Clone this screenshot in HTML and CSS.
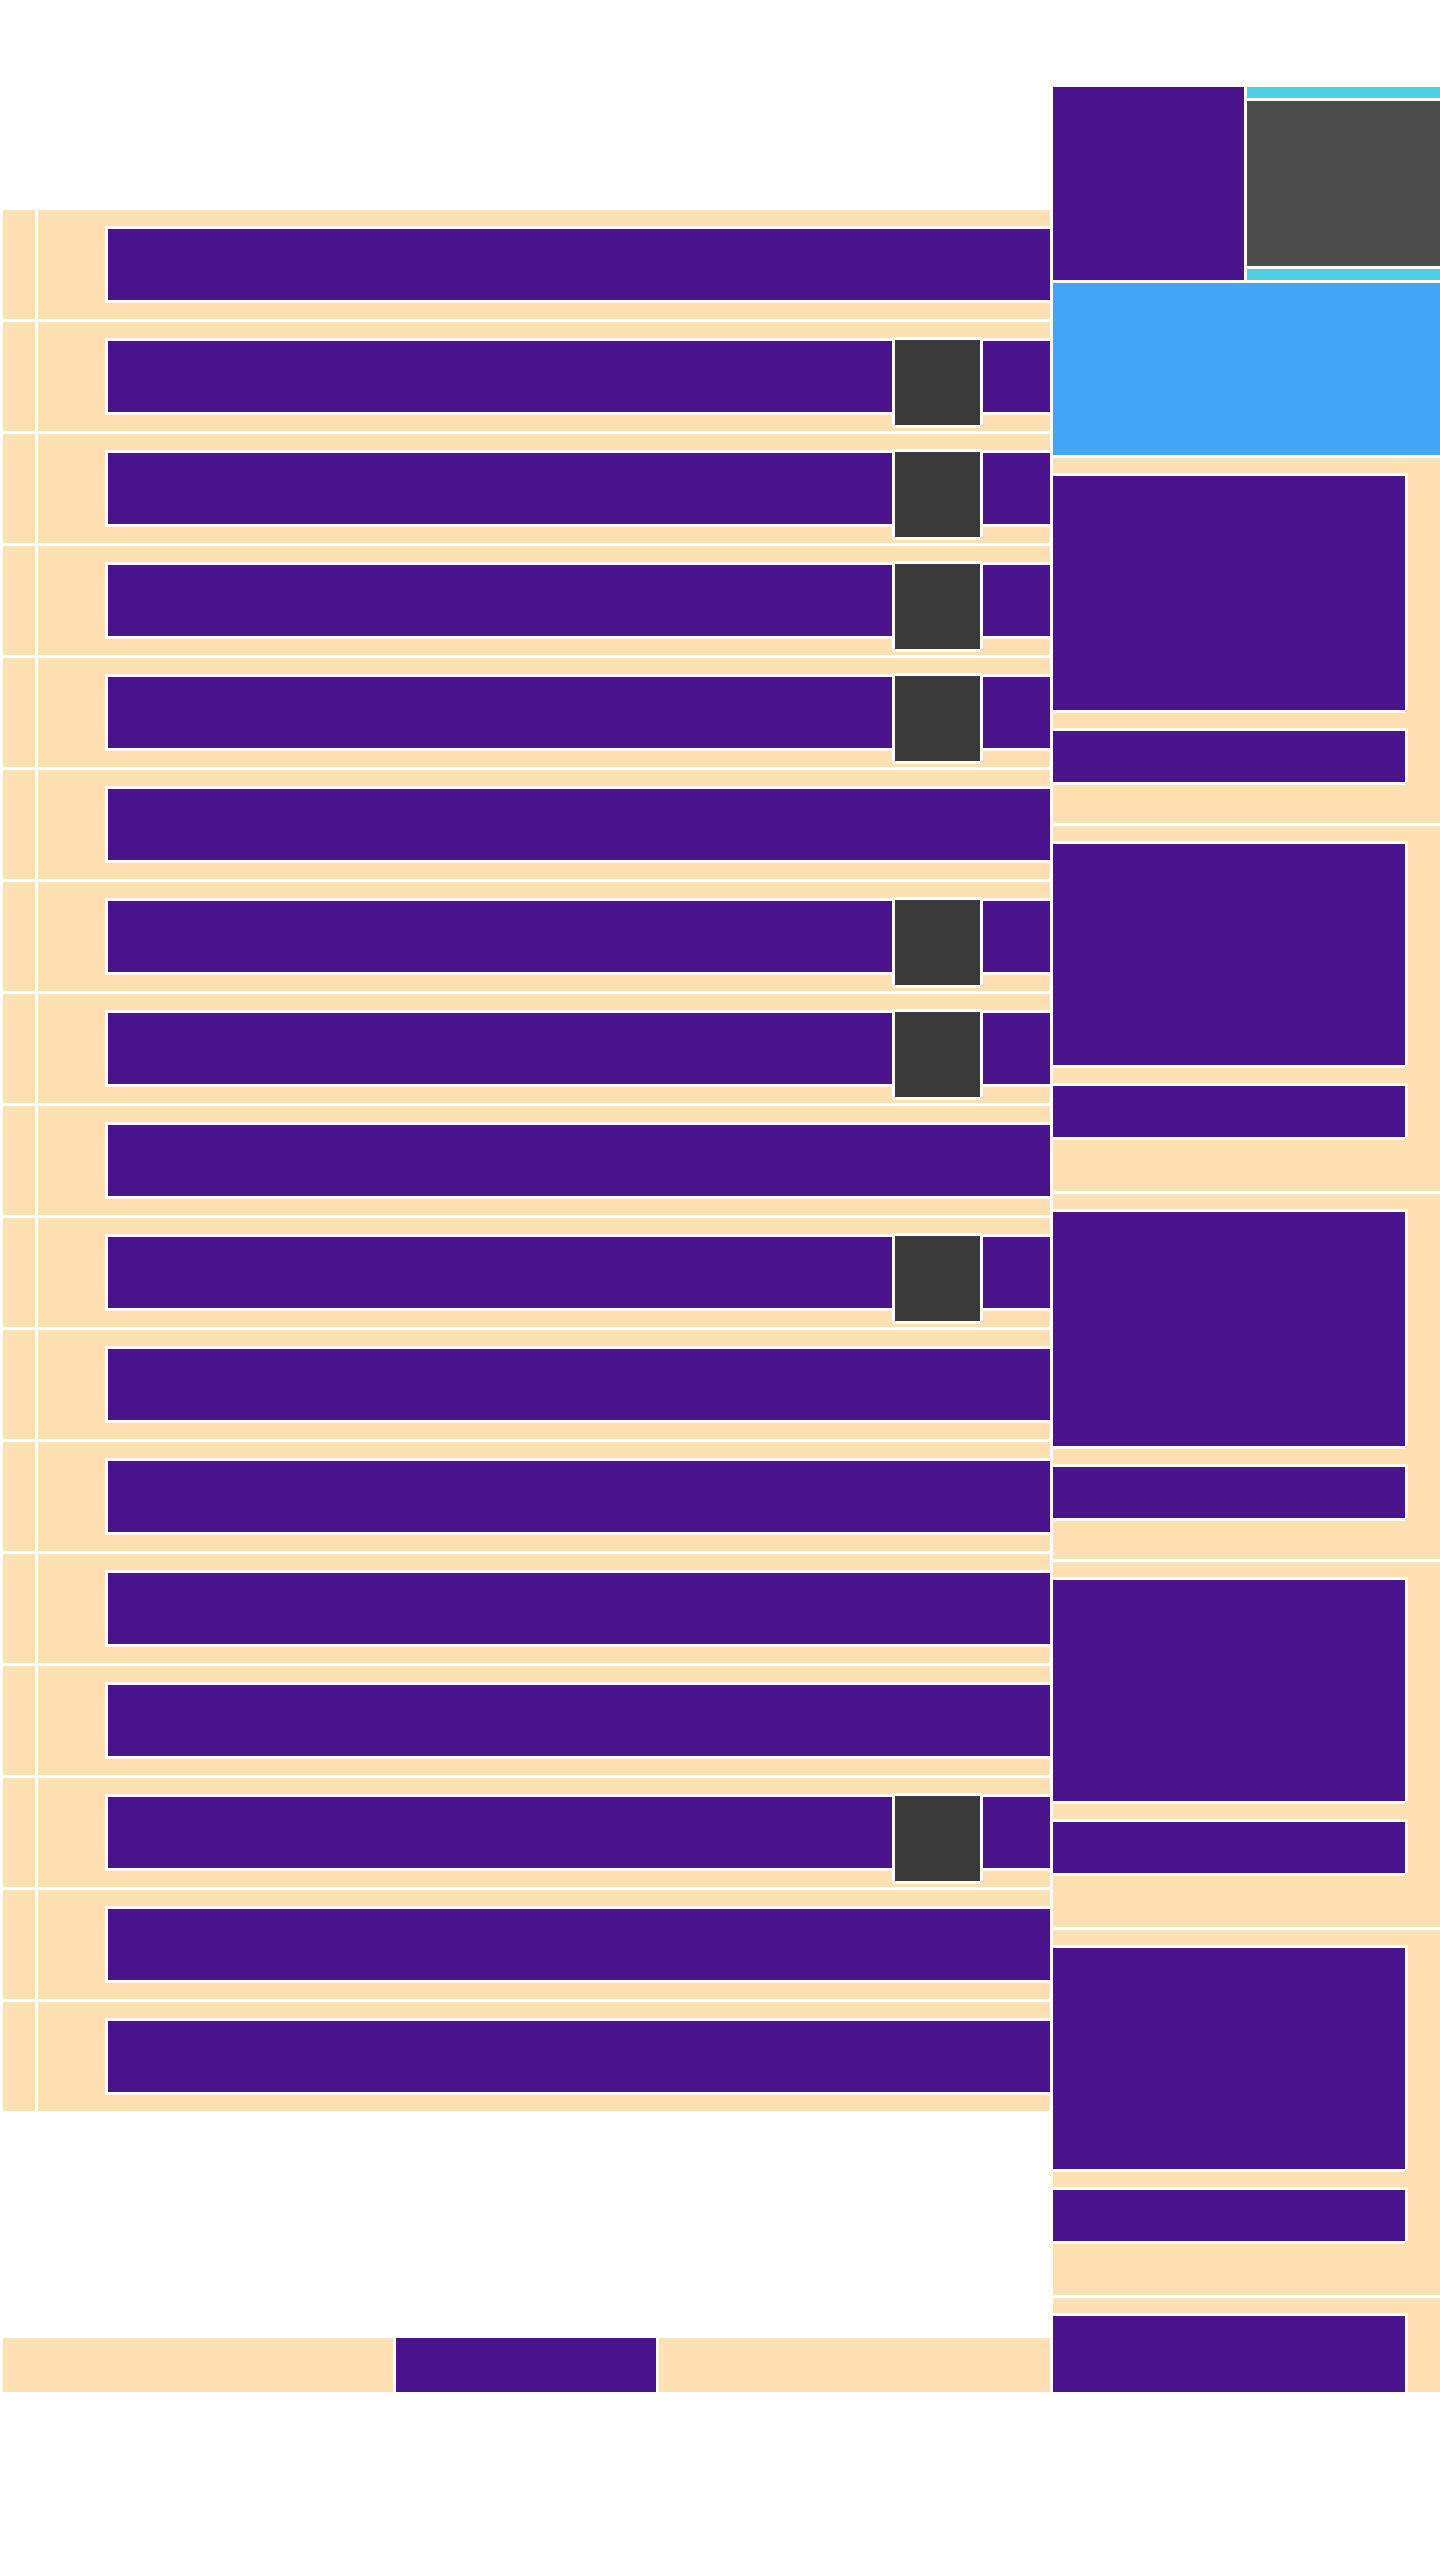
FILE: index.html
```html
<!DOCTYPE html>
<html lang="en">
<head>
<meta charset="utf-8">
<title>Layout</title>
<link rel="stylesheet" href="styles.css">
</head>
<body>
<div class="page">
  <main class="left">
    <div class="rows">
      <div class="row"><div class="lead"></div><div class="cell"><div class="bar"></div></div></div>
      <div class="row"><div class="lead"></div><div class="cell"><div class="bar"></div><div class="thumb"></div></div></div>
      <div class="row"><div class="lead"></div><div class="cell"><div class="bar"></div><div class="thumb"></div></div></div>
      <div class="row"><div class="lead"></div><div class="cell"><div class="bar"></div><div class="thumb"></div></div></div>
      <div class="row"><div class="lead"></div><div class="cell"><div class="bar"></div><div class="thumb"></div></div></div>
      <div class="row"><div class="lead"></div><div class="cell"><div class="bar"></div></div></div>
      <div class="row"><div class="lead"></div><div class="cell"><div class="bar"></div><div class="thumb"></div></div></div>
      <div class="row"><div class="lead"></div><div class="cell"><div class="bar"></div><div class="thumb"></div></div></div>
      <div class="row"><div class="lead"></div><div class="cell"><div class="bar"></div></div></div>
      <div class="row"><div class="lead"></div><div class="cell"><div class="bar"></div><div class="thumb"></div></div></div>
      <div class="row"><div class="lead"></div><div class="cell"><div class="bar"></div></div></div>
      <div class="row"><div class="lead"></div><div class="cell"><div class="bar"></div></div></div>
      <div class="row"><div class="lead"></div><div class="cell"><div class="bar"></div></div></div>
      <div class="row"><div class="lead"></div><div class="cell"><div class="bar"></div></div></div>
      <div class="row"><div class="lead"></div><div class="cell"><div class="bar"></div><div class="thumb"></div></div></div>
      <div class="row"><div class="lead"></div><div class="cell"><div class="bar"></div></div></div>
      <div class="row"><div class="lead"></div><div class="cell"><div class="bar"></div></div></div>
    </div>
    <footer class="footer">
      <div class="foot-cell"></div>
      <div class="foot-cell foot-main"></div>
      <div class="foot-cell"></div>
    </footer>
  </main>
  <aside class="right">
    <div class="head">
      <div class="head-tile"></div>
      <div class="head-stack">
        <div class="head-strip"></div>
        <div class="head-screen"></div>
        <div class="head-strip"></div>
      </div>
    </div>
    <div class="banner"></div>
    <div class="card"><div class="card-media tall"></div><div class="card-line"></div></div>
    <div class="card"><div class="card-media"></div><div class="card-line"></div></div>
    <div class="card"><div class="card-media tall"></div><div class="card-line"></div></div>
    <div class="card"><div class="card-media"></div><div class="card-line"></div></div>
    <div class="card"><div class="card-media"></div><div class="card-line"></div></div>
    <div class="card"><div class="card-media tall"></div><div class="card-line"></div></div>
  </aside>
</div>
</body>
</html>
```

FILE: styles.css
```css
* {
  box-sizing: border-box;
}

html,
body {
  margin: 0;
  padding: 0;
  background: #ffffff;
  font-family: "Liberation Sans", Arial, sans-serif;
}

.page {
  display: grid;
  grid-template-columns: 1047px 387px;
  column-gap: 3px;
  padding-left: 3px;
  width: 1440px;
  height: 2392px;
  overflow: hidden;
}

/* ---------- left column ---------- */
.left {
  display: flex;
  flex-direction: column;
  padding-top: 210px;
  min-height: 0;
}

.rows {
  display: flex;
  flex-direction: column;
  gap: 3px;
}

.row {
  display: grid;
  grid-template-columns: 32px 1fr;
  column-gap: 3px;
  height: 109px;
}

.lead,
.cell {
  background: #ffe0b2;
}

.cell {
  position: relative;
  overflow: hidden;
  padding: 19px 0 0 70px;
}

.bar,
.thumb,
.card-media,
.card-line {
  box-shadow:
    -3px 0 0 #ffffff,
    3px 0 0 #ffffff,
    0 -3px 0 #ffffff,
    0 3px 0 #ffffff,
    -3px -3px 0 #ffffff,
    3px -3px 0 #ffffff,
    -3px 3px 0 #ffffff;
}

.bar {
  height: 71px;
  background: #4a148c;
}

.thumb {
  position: absolute;
  left: 857px;
  top: 18px;
  width: 85px;
  height: 85px;
  background: #3a3a3a;
}

.footer {
  margin-top: auto;
  display: grid;
  grid-template-columns: 390px 260px 1fr;
  column-gap: 3px;
  height: 54px;
}

.foot-cell {
  background: #ffe0b2;
}

.foot-main {
  background: #4a148c;
}

/* ---------- right column ---------- */
.right {
  display: flex;
  flex-direction: column;
  gap: 3px;
  padding-top: 87px;
  min-height: 0;
  overflow: hidden;
}

.head {
  display: grid;
  grid-template-columns: 191px 1fr;
  column-gap: 3px;
  height: 193px;
  flex-shrink: 0;
}

.head-tile {
  background: #4a148c;
}

.head-stack {
  display: flex;
  flex-direction: column;
  gap: 3px;
}

.head-strip {
  height: 11px;
  background: #4dd0e1;
}

.head-screen {
  flex: 1;
  background: #4b4b4b;
}

.banner {
  height: 172px;
  flex-shrink: 0;
  background: #42a5f5;
}

.card {
  flex-shrink: 0;
  height: 365px;
  padding-top: 18px;
  background: #ffe0b2;
}

.card-media {
  width: 352px;
  height: 221px;
  background: #4a148c;
}

.card-media.tall {
  height: 234px;
}

.card-line {
  width: 352px;
  height: 51px;
  margin-top: 21px;
  background: #4a148c;
}
```
